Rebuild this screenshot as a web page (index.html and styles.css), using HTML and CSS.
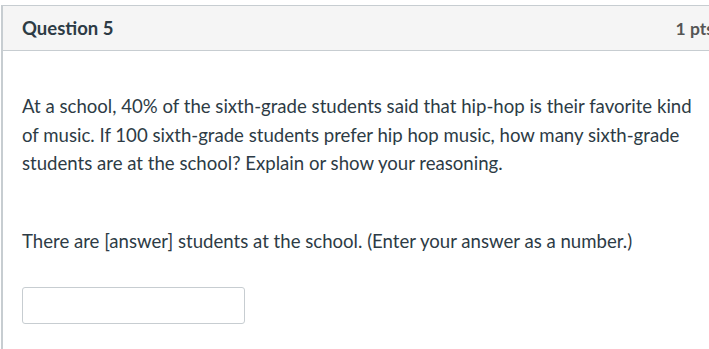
FILE: index.html
```html
<!DOCTYPE html>
<html lang="en">
<head>
    <meta charset="UTF-8">
    <title>Question 5</title>
    <link rel="stylesheet" href="styles.css">
</head>
<body>
    <div class="question">
        <div class="header">
            <span class="title">Question 5</span>
            <span class="points">1 pts</span>
        </div>
        <div class="content">
            <p>At a school, 40% of the sixth-grade students said that hip-hop is their favorite kind of music. If 100 sixth-grade students prefer hip hop music, how many sixth-grade students are at the school? Explain or show your reasoning.</p>
            <p class="prompt">There are [answer] students at the school. (Enter your answer as a number.)</p>
            <input type="text" class="answer">
        </div>
    </div>
</body>
</html>
```

FILE: styles.css
```css
html, body {
    overflow: hidden;
}
body {
    margin: 0;
    background-color: white;
    font-family: Lato, "Open Sans", sans-serif;
    color: #2d3b45;
}
.question {
    width: 731px;
    margin-top: 5px;
    margin-left: 1px;
    border: 1px solid #c7cdd1;
    border-left-width: 2px;
}
.header {
    display: flex;
    justify-content: space-between;
    align-items: center;
    height: 44px;
    padding: 0 20px 0 19px;
    background-color: #f5f5f5;
    border-bottom: 1px solid #c7cdd1;
    font-size: 18.5px;
    font-weight: bold;
}
.points {
    color: #555;
    font-size: 17.5px;
}
.content {
    padding: 41px 20px 60px 19px;
    font-size: 18.6px;
    line-height: 28.5px;
}
.content p {
    width: 690px;
    margin: 0;
}
.prompt {
    margin-top: 49px !important;
}
.answer {
    display: block;
    width: 221px;
    height: 35px;
    margin-top: 32px;
    padding: 0;
    border: 1px solid #c7cdd1;
    border-radius: 3px;
}
```
